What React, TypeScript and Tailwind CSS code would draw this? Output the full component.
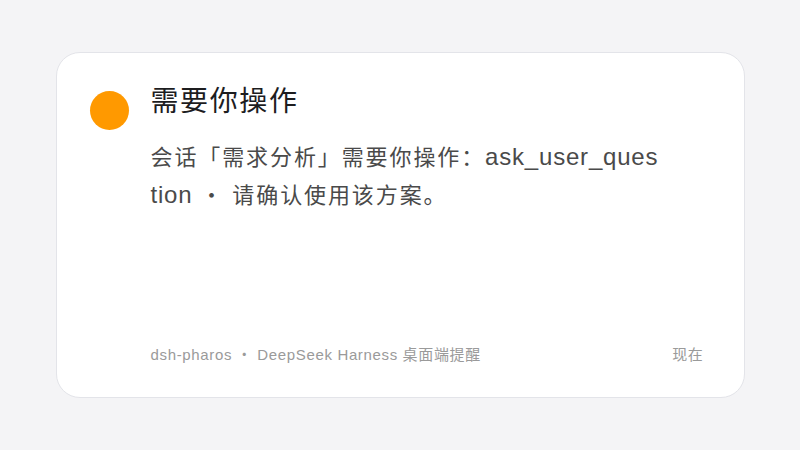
import React from "react";

export default function App() {
  return (
    <div
      className="w-[800px] h-[450px] bg-[#f4f4f6] flex items-center justify-center"
      style={{ fontFamily: '"Liberation Sans", "Noto Sans CJK SC", sans-serif' }}
    >
      <div className="w-[689px] h-[346px] rounded-[24px] border border-[#e3e4e9] bg-white flex flex-col pl-[33px] pr-[40px] pt-[32px] pb-[31px]">
        <div className="flex flex-row gap-[22px]">
          <div className="w-[39px] h-[39px] rounded-full bg-[#ff9900] mt-[6px] shrink-0" />
          <div className="flex flex-col">
            <div className="text-[28px] leading-[34px] tracking-[1.6px] text-[#1d1d1f] font-normal">需要你操作</div>
            <div className="mt-[19px] w-[511px] text-[22px] leading-[37px] tracking-[1.9px] text-[#4a4a4a] break-all">
              会话「需求分析」需要你操作：<span className="text-[24px] leading-[37px] tracking-[0.8px]">ask_user_question</span> ・ 请确认使用该方案。
            </div>
          </div>
        </div>
        <div className="mt-auto flex flex-row justify-between pl-[61px] text-[15px] leading-[22px] tracking-[0.65px] text-[#9a9a9a]">
          <span>dsh-pharos ・ DeepSeek Harness 桌面端提醒</span>
          <span>现在</span>
        </div>
      </div>
    </div>
  );
}
